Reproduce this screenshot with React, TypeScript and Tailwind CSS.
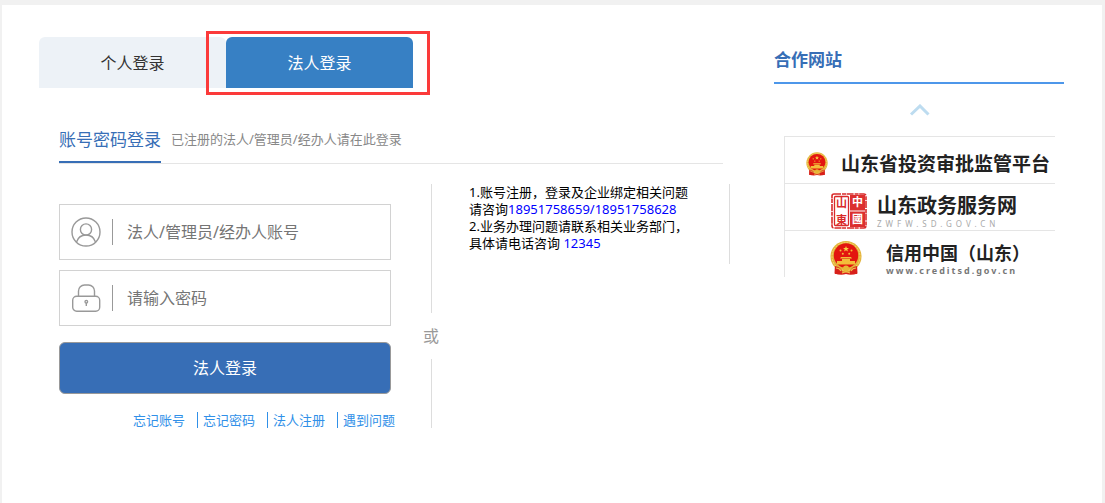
import type { ReactNode } from 'react';

const links = ['忘记账号', '忘记密码', '法人注册', '遇到问题'];

function UserIcon() {
  return (
    <svg className="w-[30px] h-[30px] shrink-0" viewBox="0 0 30 30" fill="none" stroke="#999" strokeWidth="1.4" aria-hidden="true">
      <circle cx="15" cy="15" r="14" />
      <circle cx="15" cy="12.5" r="5.6" />
      <path d="M5.5 25C7 20.5 10.5 18 15 18s8 2.500 9.500 7" />
    </svg>
  );
}

function LockIcon() {
  return (
    <svg className="w-[30px] h-[30px] shrink-0" viewBox="0 0 30 30" fill="none" stroke="#999" strokeWidth="1.4" aria-hidden="true">
      <path d="M7.500 13V8a6 6 0 0 1 6-6h4a6 6 0 0 1 6 6v5" />
      <rect x="1.700" y="13.200" width="27" height="15" rx="4" />
      <circle cx="15.300" cy="18.700" r="1.300" />
      <path d="M15.300 20v3" />
    </svg>
  );
}

function Emblem({ className }: { className: string }) {
  return (
    <svg className={className} viewBox="0 0 32 34" aria-hidden="true">
      <path d="M5 23 4.500 32.500q6 2 11.500 .6 5.500 1.400 11.500-.6L27 23z" fill="#d8201a" />
      <circle cx="16" cy="15.500" r="15.500" fill="#e3b33a" />
      <circle cx="16" cy="15.500" r="14" fill="none" stroke="#f6d774" strokeWidth="1" strokeDasharray="2 1" />
      <circle cx="16" cy="14.500" r="12.200" fill="#e3150f" />
      <path d="m16 5 .8 2h2.200l-1.700 1.300.6 2.100-1.900-1.200-1.900 1.200.6-2.100L13 7h2.200z" fill="#f8cf45" />
      <g fill="#f3bd3a">
        <circle cx="10.500" cy="9.500" r="1" />
        <circle cx="21.500" cy="9.500" r="1" />
        <circle cx="12.800" cy="12.800" r="1" />
        <circle cx="19.200" cy="12.800" r="1" />
        <path d="M11 16h10l1 1.500H10zM12 18h8v2h-8zM7 20h18v3.500H7z" />
      </g>
      <path d="M5 25q5.500 1 7 5l-1 3H5zM27 25q-5.500 1-7 5l1 3h6z" fill="#d8201a" />
      <circle cx="16" cy="27.500" r="3" fill="#e8b535" />
      <path d="M6 27q3.500 0 5 3M26 27q-3.500 0-5 3M12 32q4-2 8 0" fill="none" stroke="#f0c44c" strokeWidth="1.200" />
    </svg>
  );
}

function Seal() {
  return (
    <svg className="w-[36px] h-[36px] shrink-0 font-['Noto_Sans_CJK_TC',sans-serif]" viewBox="0 0 36 36" aria-hidden="true">
      <rect x="1" y="1" width="34" height="34" rx="2" fill="#fff" stroke="#d92a2a" strokeWidth="1.600" strokeDasharray="7 1 4 .6" />
      <rect x="3.500" y="3.500" width="14" height="29" rx="1" fill="none" stroke="#d92a2a" strokeWidth="1.300" />
      <rect x="19" y="2" width="15" height="15.500" fill="#dc2f2f" />
      <rect x="19" y="18.500" width="15" height="15.500" fill="#dc2f2f" />
      <g fontSize="11" fontWeight="700" textAnchor="middle">
        <g fill="#d92a2a">
          <text x="10.500" y="14">山</text>
          <text x="10.500" y="31">東</text>
        </g>
        <g fill="#fff">
          <text x="26.500" y="13">中</text>
          <text x="26.500" y="30">國</text>
        </g>
      </g>
    </svg>
  );
}

function Field({ id, type, placeholder, icon }: { id: string; type: string; placeholder: string; icon: ReactNode }) {
  return (
    <div className="flex items-center h-14 mr-1 pl-[11px] border border-[#d2d2d2]">
      <label htmlFor={id} aria-label={placeholder} className="flex items-center">
        {icon}
        <span className="w-px h-[26px] ml-[11px] mr-[14px] bg-[#999]" />
      </label>
      <input id={id} type={type} placeholder={placeholder} className="flex-1 min-w-0 h-full text-base outline-none placeholder:text-[#757575]" />
    </div>
  );
}

function Partners() {
  return (
    <aside className="w-[290px] shrink-0 pt-2">
      <h2 className="h-[39px] border-b-2 border-[#4d97ea] text-[17px] leading-[30px] font-bold text-[#376eb6]">合作网站</h2>
      <button type="button" aria-label="向上" className="block mx-auto h-[52px]">
        <svg className="w-[22px] h-3" viewBox="0 0 22 12" fill="none" stroke="#bddcf0" strokeWidth="3" aria-hidden="true">
          <path d="M3 10.500 12 2l8.500 8.500" />
        </svg>
      </button>
      <div className="ml-[10px] mr-[9px] border-l border-[#e5e5e5] text-[#222]">
        <a href="#" className="flex items-center h-[47px] pt-2 pl-[21px] border-t border-[#e5e5e5] whitespace-nowrap">
          <Emblem className="w-[22px] h-[26px] shrink-0" />
          <span className="ml-[13px] text-[19px] leading-6 font-bold">山东省投资审批监管平台</span>
        </a>
        <a href="#" className="flex items-center h-[47px] pl-[46px] pt-2 border-t border-[#e5e5e5] whitespace-nowrap">
          <Seal />
          <span className="ml-[10px]">
            <span className="block text-[20px] leading-[26px] font-bold">山东政务服务网</span>
            <span className="block text-[8px] leading-[10px] tracking-[4px] text-[#aaa]">ZWFW.SD.GOV.CN</span>
          </span>
        </a>
        <a href="#" className="flex items-center h-[47px] pl-[45px] pt-2 border-t border-[#e5e5e5] whitespace-nowrap">
          <Emblem className="w-8 h-[34px] shrink-0" />
          <span className="ml-6">
            <span className="block text-[18px] leading-[26px] font-bold">信用中国（山东）</span>
            <span className="block text-[9px] leading-[10px] tracking-[2px] font-bold text-[#777]">www.creditsd.gov.cn</span>
          </span>
        </a>
      </div>
    </aside>
  );
}

export default function App() {
  return (
    <div className="flex flex-col min-h-screen bg-[#f1f1f1] pt-[5px] pl-[2px] pr-[3px] font-['Noto_Sans','Noto_Sans_CJK_SC',sans-serif]">
      <main className="flex flex-1 gap-11 bg-white pt-8 pl-[37px] pr-[38px]">
        <section className="flex-1 min-w-0">
          <div className="flex">
            <button type="button" className="w-[187px] h-[51px] rounded-t-md bg-[#edf2f7] text-base text-[#333]">个人登录</button>
            <div className="relative">
              <button type="button" className="w-[187px] h-[51px] rounded-t-md bg-[#3780c4] text-base text-white">法人登录</button>
              <div className="absolute -top-[6px] -left-5 w-56 h-16 border-3 border-[#fb3a3a] pointer-events-none" />
            </div>
          </div>

          <div className="flex items-center mt-7 ml-5 mr-[7px] border-b border-[#e5e5e5]">
            <h1 className="h-[47px] border-b-2 border-[#376eb6] text-[17px] leading-[47px] text-[#376eb6]">账号密码登录</h1>
            <span className="ml-[10px] text-[13px] text-[#888]">已注册的法人/管理员/经办人请在此登录</span>
          </div>

          <div className="flex items-start mt-5 ml-5">
            <form className="w-[336px] pt-5" onSubmit={(e) => e.preventDefault()}>
              <div className="flex flex-col gap-[10px]">
                <Field id="account" type="text" placeholder="法人/管理员/经办人账号" icon={<UserIcon />} />
                <Field id="password" type="password" placeholder="请输入密码" icon={<LockIcon />} />
              </div>
              <div className="mt-4 mr-1">
                <button type="submit" className="w-full h-[52px] rounded-md border border-[#999] bg-[#376eb6] text-base text-white">法人登录</button>
              </div>
              <nav className="flex justify-end mt-[18px] text-[13px] leading-4 text-[#3090e8]">
                {links.map((text, i) => (
                  <a key={text} href="#" className={i > 0 ? 'ml-3 pl-[5px] border-l border-[#3090e8]' : ''}>
                    {text}
                  </a>
                ))}
              </nav>
            </form>

            <div className="flex flex-col items-center self-stretch w-4 ml-7 text-base text-[#999]">
              <span className="w-px h-[129px] bg-[#ddd]" />
              <span className="leading-[46px]">或</span>
              <span className="w-px flex-1 bg-[#ddd]" />
            </div>

            <div className="flex-1 h-20 ml-[30px] border-r border-[#ddd] text-[13px] leading-[17px] text-black whitespace-nowrap">
              <p>
                1.账号注册，登录及企业绑定相关问题
                <br />
                请咨询<span className="text-[#0000ff]">18951758659/18951758628</span>
              </p>
              <p>
                2.业务办理问题请联系相关业务部门，
                <br />
                具体请电话咨询 <span className="text-[#0000ff]">12345</span>
              </p>
            </div>
          </div>
        </section>
        <Partners />
      </main>
    </div>
  );
}
